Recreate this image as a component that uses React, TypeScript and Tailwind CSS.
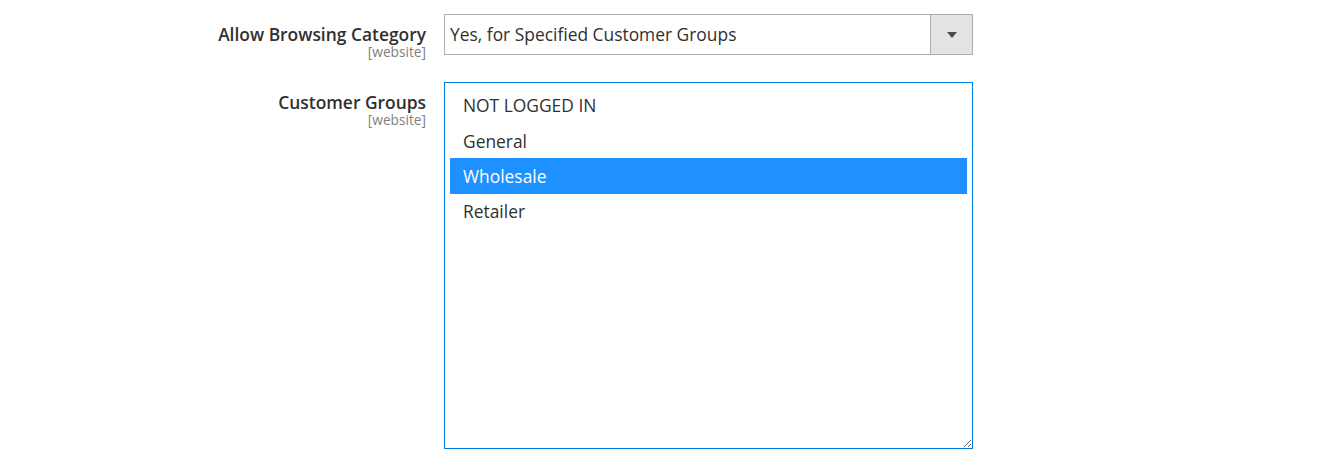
const font = { fontFamily: '"Open Sans", "Noto Sans", sans-serif' };

const groups = ['NOT LOGGED IN', 'General', 'Wholesale', 'Retailer'];

function FieldLabel({ title }: { title: string }) {
  return (
    <div className="w-[426px] shrink-0 text-right pt-[10px]">
      <div className="text-[17.4px] leading-[20px] font-semibold text-[#303030]">{title}</div>
      <div className="text-[13.7px] leading-[16px] text-[#808080]">[website]</div>
    </div>
  );
}

export default function App() {
  return (
    <div className="min-h-screen bg-white pt-[14px]" style={font}>
      <div className="flex">
        <FieldLabel title="Allow Browsing Category" />
        <div className="ml-[18px] w-[529px] h-[41px] flex border border-[#adadad] bg-white">
          <div className="flex-1 flex items-center pl-[5px] text-[17.4px] text-[#303030]">
            Yes, for Specified Customer Groups
          </div>
          <div className="w-[42px] border-l border-[#adadad] bg-[#e3e3e3] flex items-center justify-center">
            <svg width="10" height="6" viewBox="0 0 10 6">
              <path d="M0 0 L10 0 L5 6 Z" fill="#514943" />
            </svg>
          </div>
        </div>
      </div>

      <div className="flex mt-[22px]">
        <FieldLabel title="Customer Groups" />
        <div className="ml-[18px] w-[529px] h-[367px] border border-[#007bdb] bg-white px-[5px] pt-[4.5px] resize overflow-auto">
          {groups.map((g) => (
            <div
              key={g}
              className={
                'h-[35.4px] flex items-center pl-[13px] text-[17.4px] ' +
                (g === 'Wholesale' ? 'bg-[#1e90ff] text-white' : 'text-[#303030]')
              }
            >
              {g}
            </div>
          ))}
        </div>
      </div>
    </div>
  );
}
